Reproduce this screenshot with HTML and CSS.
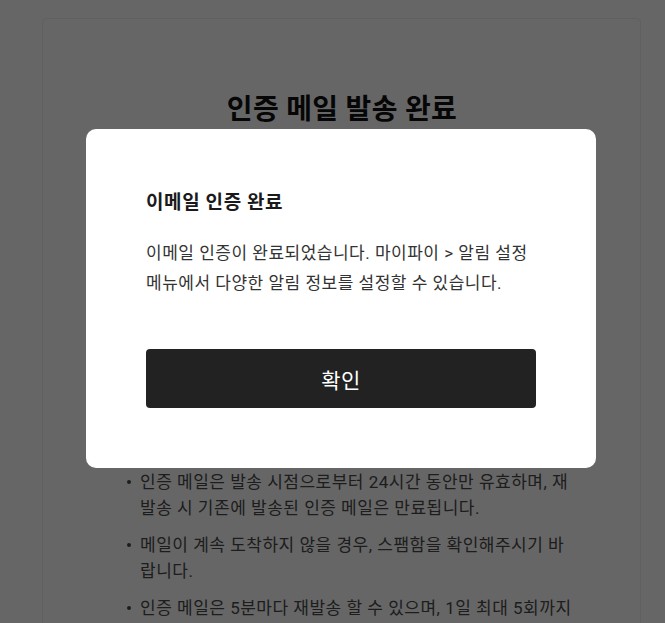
FILE: index.html
```html
<!DOCTYPE html>
<html lang="ko">
<head>
<meta charset="utf-8">
<title>인증 메일 발송 완료</title>
<link rel="stylesheet" href="styles.css">
</head>
<body>
<div class="page">
  <section class="card">
    <h1 class="card-title">인증 메일 발송 완료</h1>
    <p class="card-desc">입력하신 이메일 주소로 인증 메일이 발송되었습니다.<br>메일함에서 인증 링크를 눌러 인증을 완료해주세요.</p>
    <div class="email-box">mypi@example.com</div>
    <button class="resend-btn" type="button">인증 메일 재발송</button>
    <ul class="notes">
      <li>인증 메일은 발송 시점으로부터 24시간 동안만 유효하며, 재발송 시 기존에 발송된 인증 메일은 만료됩니다.</li>
      <li>메일이 계속 도착하지 않을 경우, 스팸함을 확인해주시기 바랍니다.</li>
      <li>인증 메일은 5분마다 재발송 할 수 있으며, 1일 최대 5회까지 재발송이 가능합니다.</li>
    </ul>
  </section>
</div>

<div class="overlay">
  <div class="modal" role="dialog">
    <h2 class="modal-title">이메일 인증 완료</h2>
    <p class="modal-text">이메일 인증이 완료되었습니다. 마이파이 &gt; 알림 설정 메뉴에서 다양한 알림 정보를 설정할 수 있습니다.</p>
    <button class="modal-btn" type="button">확인</button>
  </div>
</div>
</body>
</html>
```

FILE: styles.css
```css
html, body {
  margin: 0;
  padding: 0;
  overflow: hidden;
  background: #ffffff;
  font-family: Roboto, "Noto Sans CJK KR", sans-serif;
  color: #333;
}

.page {
  padding: 18px 0 0 42px;
}

.card {
  box-sizing: border-box;
  width: 599px;
  min-height: 800px;
  border: 1px solid #f0f0f0;
  border-radius: 4px;
  padding: 73px 60px 0 81px;
  background: #fff;
}

.card-title {
  margin: 0 0 0 -20px;
  font-size: 28px;
  line-height: 36px;
  letter-spacing: 0.3px;
  font-weight: 700;
  color: #111;
  text-align: center;
}

.card-desc {
  margin: 24px 0 0;
  font-size: 16px;
  line-height: 26px;
  color: #555;
}

.email-box {
  margin-top: 24px;
  height: 56px;
  line-height: 56px;
  background: #f5f5f5;
  text-align: center;
  font-size: 16px;
  color: #222;
  width: 436px;
}

.resend-btn {
  display: block;
  margin-top: 40px;
  width: 436px;
  height: 56px;
  border: 1px solid #222;
  border-radius: 4px;
  background: #fff;
  font-family: inherit;
  font-size: 17px;
  color: #222;
}

.notes {
  list-style: none;
  margin: 89px 0 0;
  padding: 0;
}

.notes li {
  display: flex;
  font-size: 17px;
  line-height: 26px;
  letter-spacing: 0.5px;
  color: #4a4a4a;
  margin-bottom: 11px;
}

.notes li::before {
  content: "";
  flex-shrink: 0;
  width: 4px;
  height: 4px;
  border-radius: 50%;
  background: #4a4a4a;
  margin: 11px 9px 0 3px;
}

.overlay {
  position: fixed;
  inset: 0;
  background: rgba(0, 0, 0, 0.6);
  display: flex;
  justify-content: center;
  align-items: flex-start;
  padding: 129px 0 0 17px;
}

.modal {
  box-sizing: border-box;
  width: 510px;
  padding: 60px;
  background: #fff;
  border-radius: 10px;
}

.modal-title {
  margin: 0;
  font-size: 19px;
  line-height: 28px;
  letter-spacing: 0.6px;
  font-weight: 700;
  color: #1a1a1a;
}

.modal-text {
  margin: 21px 0 0;
  font-size: 17px;
  line-height: 30px;
  letter-spacing: 0.5px;
  color: #333;
}

.modal-btn {
  display: block;
  margin-top: 51px;
  width: 100%;
  height: 59px;
  border: 0;
  border-radius: 4px;
  background: #222;
  color: #fff;
  font-family: inherit;
  font-size: 21px;
  letter-spacing: 0.5px;
  cursor: pointer;
}
```
